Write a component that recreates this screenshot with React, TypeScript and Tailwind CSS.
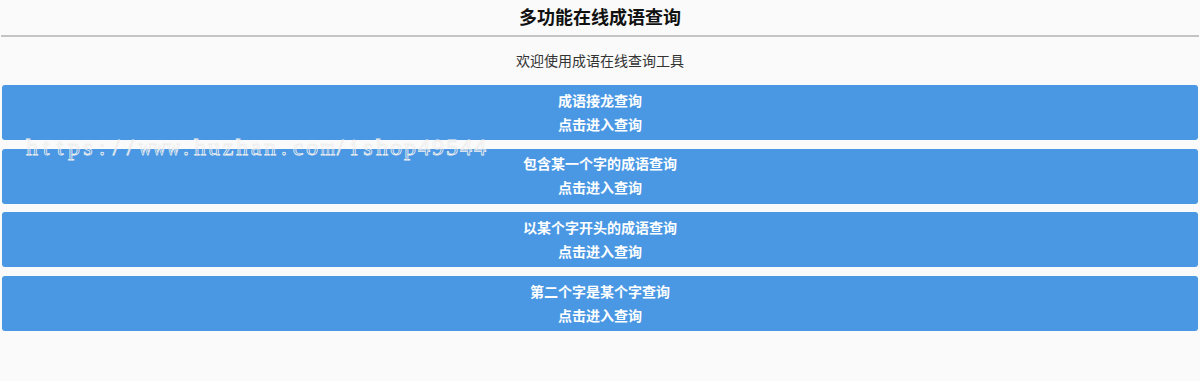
import React from "react";

const items = [
  "成语接龙查询",
  "包含某一个字的成语查询",
  "以某个字开头的成语查询",
  "第二个字是某个字查询",
];

const mark = "https://www.huzhan.com/ishop49544".split("");

export default function App() {
  return (
    <div className="relative min-h-[381px] w-full bg-[#fafafa] font-['Noto_Sans_CJK_SC','Noto_Sans',sans-serif] text-[#222]">
      <h1 className="h-[35px] pt-[3px] text-center text-[18px] font-bold leading-[26px] text-[#111]">
        多功能在线成语查询
      </h1>
      <div className="mx-[1px] h-[2px] bg-[#c4c4c4]" />
      <p className="pt-[13px] pb-[15px] text-center text-[14px] leading-[20px] text-[#333]">
        欢迎使用成语在线查询工具
      </p>
      <div className="flex flex-col gap-[8.7px] px-[2px]">
        {items.map((t) => (
          <div
            key={t}
            className="flex h-[55px] flex-col items-center justify-center rounded-[3px] bg-[#4a98e4] pb-[2px] text-[14px] font-bold leading-[24px] text-white"
          >
            <span>{t}</span>
            <span>点击进入查询</span>
          </div>
        ))}
      </div>
      <div className="pointer-events-none absolute left-[25px] top-[135px] flex font-['Liberation_Serif',serif] text-[24px] font-normal leading-[24px] text-transparent [-webkit-text-stroke:0.8px_#eeeeee]">
        {mark.map((c, i) => (
          <span
            key={i}
            className={
              c === "w" || c === "m"
                ? "inline-block w-[14px] scale-x-[0.78] text-center"
                : "inline-block w-[14px] text-center"
            }
          >
            {c}
          </span>
        ))}
      </div>
    </div>
  );
}
